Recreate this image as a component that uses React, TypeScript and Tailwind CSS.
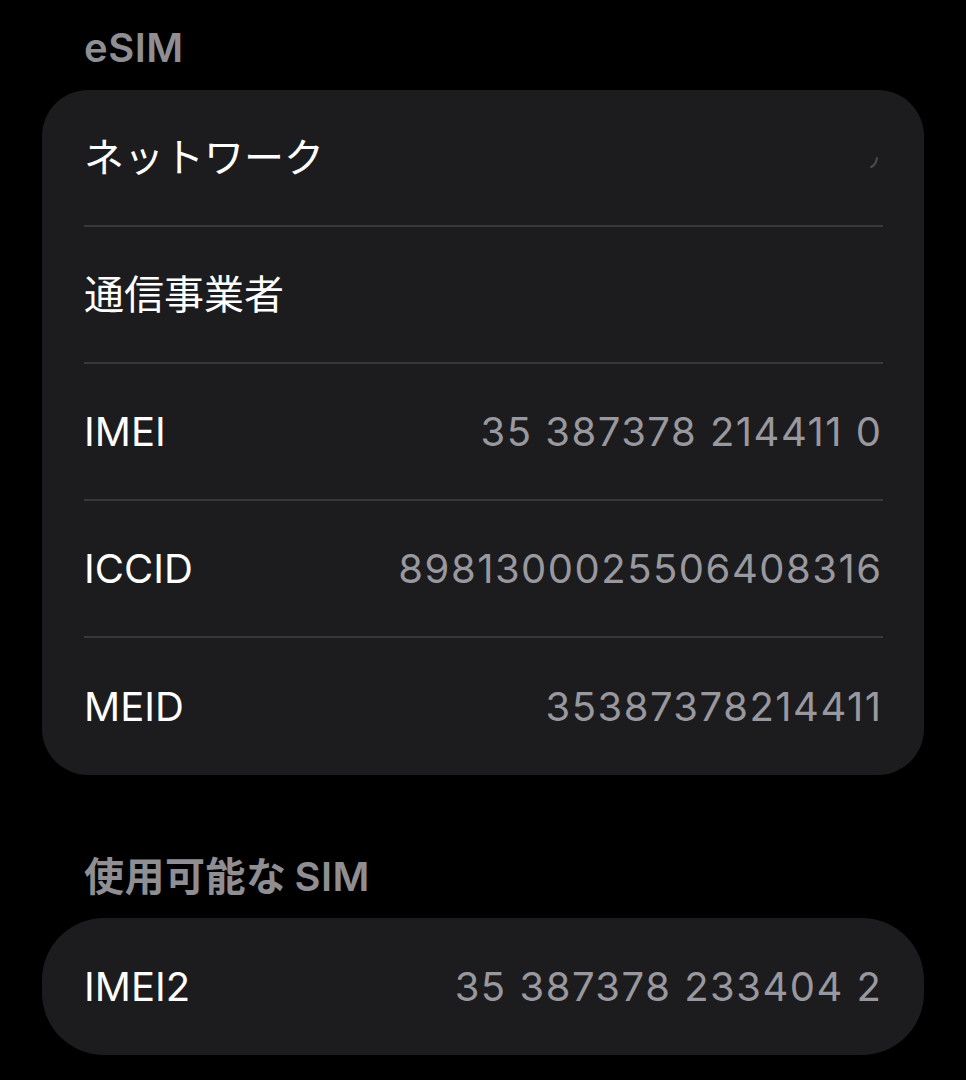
import React from 'react';

type Row = { label: string; value?: string; ghost?: boolean };

const esimRows: Row[] = [
  { label: 'ネットワーク', ghost: true },
  { label: '通信事業者' },
  { label: 'IMEI', value: '35 387378 214411 0' },
  { label: 'ICCID', value: '8981300025506408316' },
  { label: 'MEID', value: '35387378214411' },
];

const font = { fontFamily: 'Inter, "Noto Sans CJK JP", sans-serif' };

function SectionHeader({ children, className = '' }: { children: React.ReactNode; className?: string }) {
  return (
    <p className={`pl-[84px] h-[48px] leading-[48px] text-[40px] font-semibold tracking-[0.5px] text-[#8e8e93] ${className}`}>
      {children}
    </p>
  );
}

function InfoRow({ row, last }: { row: Row; last: boolean }) {
  return (
    <div className="pl-[42px] pr-[41px]">
      <div
        className={`h-[137px] flex items-center justify-between pr-[2px] ${last ? '' : 'border-b-2 border-[#38383a]'}`}
      >
        <span className="text-[40px] text-white">{row.label}</span>
        {row.value && <span className="text-[40px] tracking-[1.5px] -mr-[1.5px] text-[#98989e]">{row.value}</span>}
        {row.ghost && (
          <svg width="10" height="14" viewBox="0 0 10 14" className="mt-[10px] mr-[2px]">
            <path d="M8 2 Q7 9 2 11" stroke="#4a4a4e" strokeWidth="2" fill="none" strokeLinecap="round" />
          </svg>
        )}
      </div>
    </div>
  );
}

export default function App() {
  return (
    <div className="w-[966px] h-[1080px] bg-black overflow-hidden pt-[24px]" style={font}>
      <SectionHeader className="mb-[18px]">eSIM</SectionHeader>
      <div className="mx-[42px] rounded-[46px] bg-[#1c1c1e]">
        {esimRows.map((r, i) => (
          <InfoRow key={r.label} row={r} last={i === esimRows.length - 1} />
        ))}
      </div>
      <SectionHeader className="mt-[78px] mb-[17px]">
        使用可能な<span className="ml-[8px]">SIM</span>
      </SectionHeader>
      <div className="mx-[42px] rounded-[62px] bg-[#1c1c1e]">
        <InfoRow row={{ label: 'IMEI2', value: '35 387378 233404 2' }} last />
      </div>
    </div>
  );
}
